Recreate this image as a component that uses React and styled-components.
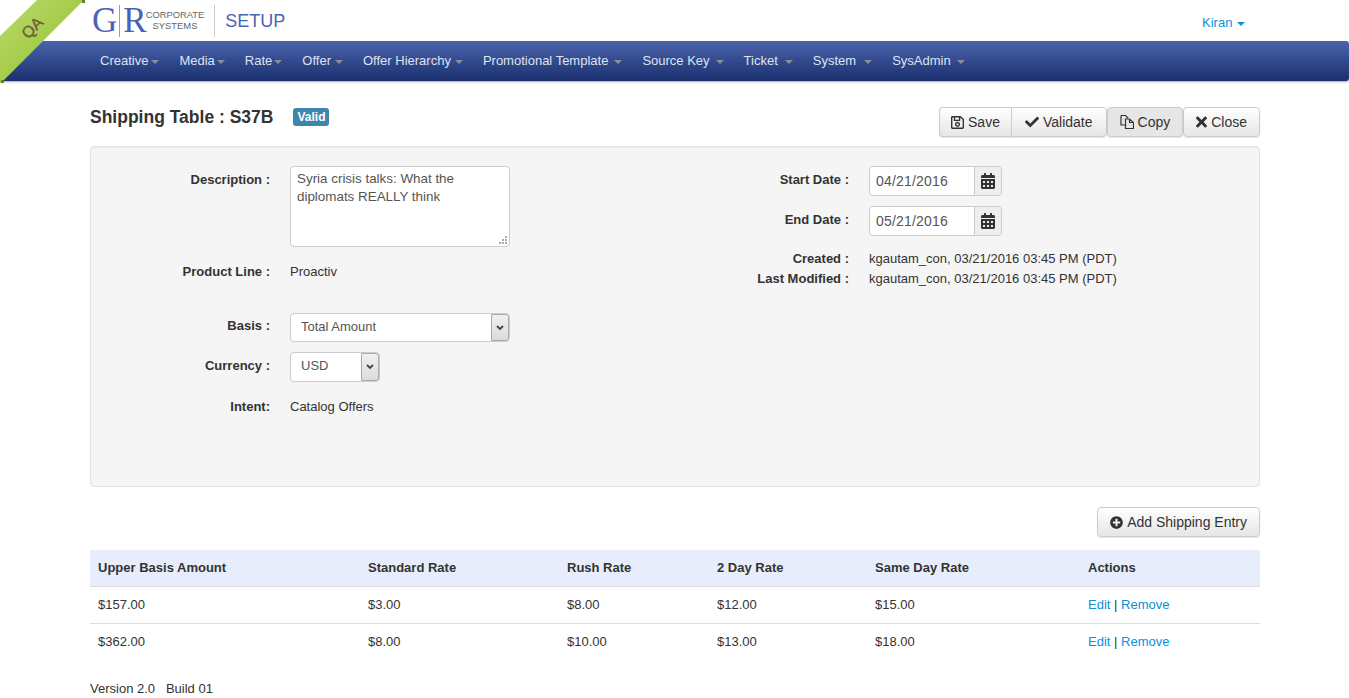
import React from "react";
import styled, { createGlobalStyle } from "styled-components";
import { FaCheck, FaRegSave, FaTimes, FaPlusCircle, FaCalendarAlt } from "react-icons/fa";

// gap is the space between a menu label and its caret
const NAV_ITEMS = [
  { label: "Creative", gap: 3 },
  { label: "Media", gap: 2 },
  { label: "Rate", gap: 2 },
  { label: "Offer", gap: 4 },
  { label: "Offer Hierarchy", gap: 4 },
  { label: "Promotional Template", gap: 6 },
  { label: "Source Key", gap: 6 },
  { label: "Ticket", gap: 7 },
  { label: "System", gap: 8 },
  { label: "SysAdmin", gap: 6 },
];

const ROWS = [
  ["$157.00", "$3.00", "$8.00", "$12.00", "$15.00"],
  ["$362.00", "$8.00", "$10.00", "$13.00", "$18.00"],
];

const Chevron = () => (
  <svg width="8" height="6" viewBox="0 0 8 6">
    <path d="M1 1l3 3 3-3" fill="none" stroke="#444" strokeWidth="1.8" />
  </svg>
);

const CopyIcon = () => (
  <svg width="14" height="16" viewBox="0 0 14 16">
    <path
      d="M1 1.500h4.500l2.500 2.500M1 1.500v9.500h4.500M5.500 5h4l4 3.500v6h-8zM9.500 5v3.500h4"
      fill="none"
      stroke="#333"
      strokeWidth="1.2"
    />
  </svg>
);

const Grip = () => (
  <GripMark width="8" height="8" viewBox="0 0 8 8">
    <path d="M6 0h2v2H6zM3 3h2v2H3zM6 3h2v2H6zM0 6h2v2H0zM3 6h2v2H3zM6 6h2v2H6z" fill="#aaa" />
  </GripMark>
);

const Select = ({ value, width, height }) => (
  <SelectBox $width={width} $height={height}>
    <SelectValue $height={height}>{value}</SelectValue>
    <SelectArrow>
      <Chevron />
    </SelectArrow>
  </SelectBox>
);

const DateField = ({ value }) => (
  <DateGroup>
    <DateValue>{value}</DateValue>
    <DateAddon>
      <CalendarIcon />
    </DateAddon>
  </DateGroup>
);

const App = () => {
  return (
    <>
      <GlobalStyle />
      <Ribbon>
        <RibbonBand>
          <RibbonText>QA</RibbonText>
        </RibbonBand>
        <RibbonTip $end="right" />
        <RibbonTip $end="left" />
      </Ribbon>
      <Header>
        <Logo>
          <LogoLetters>
            G<LogoBar />R
          </LogoLetters>
          <LogoCaption>
            <span>CORPORATE</span>
            <span>SYSTEMS</span>
          </LogoCaption>
        </Logo>
        <AppName>SETUP</AppName>
        <UserMenu>
          Kiran <Caret $color="#0c8fdc" $gap={1} />
        </UserMenu>
      </Header>
      <Nav>
        {NAV_ITEMS.map((item) => (
          <NavItem key={item.label}>
            {item.label}
            <Caret $color="#8a8f9c" $gap={item.gap} />
          </NavItem>
        ))}
      </Nav>
      <Container>
        <TitleBar>
          <Title>Shipping Table : S37B</Title>
          <Badge>Valid</Badge>
          <Toolbar>
            <ButtonGroup>
              <GroupButton>
                <SaveIcon /> Save
              </GroupButton>
              <GroupButton $pad={13}>
                <FaCheck size={14} /> Validate
              </GroupButton>
            </ButtonGroup>
            <Button $active>
              <CopyIcon /> Copy
            </Button>
            <Button>
              <CloseIcon /> Close
            </Button>
          </Toolbar>
        </TitleBar>
        <Panel>
          <Column>
            <FieldRow>
              <Label $top={4}>Description :</Label>
              <TextAreaWrap>
                <TextArea defaultValue="Syria crisis talks: What the diplomats REALLY think" />
                <Grip />
              </TextAreaWrap>
            </FieldRow>
            <FieldRow $mt={15}>
              <Label>Product Line :</Label>
              <Value>Proactiv</Value>
            </FieldRow>
            <FieldRow $mt={31}>
              <Label $top={3}>Basis :</Label>
              <Select value="Total Amount" width={220} height={29} />
            </FieldRow>
            <FieldRow $mt={10}>
              <Label $top={4}>Currency :</Label>
              <Select value="USD" width={90} height={30} />
            </FieldRow>
            <FieldRow $mt={15}>
              <Label>Intent:</Label>
              <Value>Catalog Offers</Value>
            </FieldRow>
          </Column>
          <Column>
            <FieldRow>
              <Label $top={4}>Start Date :</Label>
              <DateField value="04/21/2016" />
            </FieldRow>
            <FieldRow $mt={10}>
              <Label $top={4}>End Date :</Label>
              <DateField value="05/21/2016" />
            </FieldRow>
            <FieldRow $mt={13}>
              <Label>Created :</Label>
              <Value>kgautam_con, 03/21/2016 03:45 PM (PDT)</Value>
            </FieldRow>
            <FieldRow>
              <Label>Last Modified :</Label>
              <Value>kgautam_con, 03/21/2016 03:45 PM (PDT)</Value>
            </FieldRow>
          </Column>
        </Panel>
        <AddBar>
          <Button>
            <FaPlusCircle size={13} /> Add Shipping Entry
          </Button>
        </AddBar>
        <Table>
          <colgroup>
            <col width="270" />
            <col width="199" />
            <col width="150" />
            <col width="158" />
            <col width="213" />
            <col width="180" />
          </colgroup>
          <thead>
            <tr>
              <Th>Upper Basis Amount</Th>
              <Th>Standard Rate</Th>
              <Th>Rush Rate</Th>
              <Th>2 Day Rate</Th>
              <Th>Same Day Rate</Th>
              <Th>Actions</Th>
            </tr>
          </thead>
          <tbody>
            {ROWS.map((row) => (
              <BodyRow key={row[0]}>
                {row.map((cell, i) => (
                  <Td key={i}>{cell}</Td>
                ))}
                <Td>
                  <Link>Edit</Link> | <Link>Remove</Link>
                </Td>
              </BodyRow>
            ))}
          </tbody>
        </Table>
        <Footer>Version 2.0 &nbsp; Build 01</Footer>
      </Container>
    </>
  );
};

export default App;

const GlobalStyle = createGlobalStyle`
  html, body {
    margin: 0;
    padding: 0;
    background: #fff;
    color: #333;
    font-family: "Liberation Sans", Arial, sans-serif;
    font-size: 13px;
    line-height: 20px;
  }
`;

const SaveIcon = styled(FaRegSave)`
  width: 13px;
  height: 15px;
`;

const CloseIcon = styled(FaTimes)`
  width: 11px;
  height: 16px;
`;

const CalendarIcon = styled(FaCalendarAlt)`
  width: 14px;
  height: 16px;
`;

const Ribbon = styled.div`
  position: absolute;
  top: 0;
  left: 0;
  width: 84px;
  height: 83px;
  z-index: 2;
`;

const RibbonBand = styled.div`
  width: 100%;
  height: 100%;
  background: linear-gradient(135deg, #bcd96d 0%, #a2cb47 55%, #8ab52f 100%);
  clip-path: polygon(37px 0, 84px 0, 1px 83px, 0 83px, 0 36px);
`;

const RibbonText = styled.span`
  position: absolute;
  left: 21px;
  top: 18px;
  transform: rotate(-45deg);
  font-size: 16px;
  font-weight: 400;
  -webkit-text-stroke: 0.3px #6b5b3a;
  color: #6b5b3a;
`;

const RibbonTip = styled.span`
  position: absolute;
  width: 3px;
  height: 3px;
  background: #5f7f2a;
  ${({ $end }) => ($end === "right" ? "right: -1px; top: 0;" : "left: 1px; bottom: 0;")}
`;

const Header = styled.header`
  display: flex;
  align-items: center;
  height: 41px;
  padding: 0 104px 0 93px;
  box-sizing: border-box;
`;

const Logo = styled.div`
  display: flex;
  align-items: center;
  height: 32px;
  padding-right: 10px;
  border-right: 1px solid #ccc;
`;

const LogoLetters = styled.div`
  display: flex;
  align-items: center;
  margin-left: -1px;
  font-family: "Liberation Serif", serif;
  font-size: 35px;
  line-height: 32px;
  color: #4a63b5;
`;

const LogoBar = styled.span`
  display: inline-block;
  width: 1px;
  height: 32px;
  margin: 0 3px 0 2px;
  background: #8fbb4b;
`;

const LogoCaption = styled.div`
  display: flex;
  flex-direction: column;
  align-items: center;
  margin-left: -1px;
  font-size: 9.4px;
  line-height: 10.500px;
  color: #666;
`;

const AppName = styled.div`
  margin: 0 0 0 10px;
  font-size: 18px;
  color: #4a63b5;
`;

const UserMenu = styled.a`
  margin-left: auto;
  margin-top: 5px;
  color: #0c8fdc;
`;

const Caret = styled.span`
  display: inline-block;
  width: 0;
  height: 0;
  margin-left: ${({ $gap }) => $gap}px;
  vertical-align: middle;
  border-top: 4px solid ${({ $color }) => $color};
  border-left: 4px solid transparent;
  border-right: 4px solid transparent;
`;

const Nav = styled.nav`
  display: flex;
  align-items: center;
  gap: 20px;
  height: 40px;
  padding-left: 100px;
  box-sizing: border-box;
  border-radius: 3px;
  background: linear-gradient(to bottom, #4a63ab, #1a3070);
  box-shadow: 0 1px 2px rgba(0, 0, 0, 0.35);
`;

const NavItem = styled.a`
  color: #dfe3ee;
  white-space: nowrap;
`;

const Container = styled.main`
  width: 1170px;
  margin: 0 0 0 90px;
`;

const TitleBar = styled.div`
  display: flex;
  align-items: flex-start;
  height: 30px;
  margin-top: 26px;
`;

const Title = styled.h1`
  margin: 0 20px 0 0;
  font-size: 17.5px;
  font-weight: 700;
  line-height: 20px;
`;

const Badge = styled.span`
  margin-top: 1px;
  padding: 0 4px;
  border-radius: 3px;
  background: #3e87ac;
  color: #fff;
  font-size: 12px;
  font-weight: 700;
  line-height: 18px;
`;

const Toolbar = styled.div`
  display: flex;
  margin-left: auto;
`;

const ButtonGroup = styled.div`
  display: flex;
`;

const Button = styled.button`
  display: inline-flex;
  align-items: center;
  gap: 4px;
  height: 30px;
  padding: 0 12px;
  border: 1px solid #ccc;
  border-radius: 4px;
  background: ${({ $active }) =>
    $active ? "#e6e6e6" : "linear-gradient(to bottom, #fff, #e6e6e6)"};
  box-shadow: 0 1px 1px rgba(0, 0, 0, 0.1);
  color: #333;
  font-family: inherit;
  font-size: 14px;
`;

const GroupButton = styled(Button)`
  padding: 0 ${({ $pad }) => $pad || 11}px;
  border-radius: 0;
  &:first-child {
    border-radius: 4px 0 0 4px;
    border-right: 0;
  }
  &:last-child {
    border-radius: 0 4px 4px 0;
  }
`;

const Panel = styled.section`
  display: grid;
  grid-template-columns: 579px 1fr;
  height: 341px;
  margin-top: 9px;
  padding-top: 19px;
  box-sizing: border-box;
  border: 1px solid #e3e3e3;
  border-radius: 4px;
  background: #f5f5f5;
  box-shadow: inset 0 1px 1px rgba(0, 0, 0, 0.05);
`;

const Column = styled.div`
  display: flex;
  flex-direction: column;
`;

const FieldRow = styled.div`
  display: flex;
  align-items: flex-start;
  gap: 20px;
  margin-top: ${({ $mt }) => $mt || 0}px;
`;

const Label = styled.label`
  flex: 0 0 179px;
  padding-top: ${({ $top }) => $top || 0}px;
  text-align: right;
  font-weight: 700;
`;

const Value = styled.div`
  color: #333;
`;

const TextAreaWrap = styled.div`
  position: relative;
  display: flex;
`;

const TextArea = styled.textarea`
  width: 220px;
  height: 81px;
  box-sizing: border-box;
  padding: 3px 6px;
  border: 1px solid #ccc;
  border-radius: 4px;
  background: #fff;
  color: #555;
  font-family: inherit;
  font-size: 13.4px;
  line-height: 18px;
  outline: none;
  resize: none;
`;

const GripMark = styled.svg`
  position: absolute;
  right: 3px;
  bottom: 3px;
`;

const SelectBox = styled.div`
  display: flex;
  align-items: stretch;
  width: ${({ $width }) => $width}px;
  height: ${({ $height }) => $height}px;
  box-sizing: border-box;
  border: 1px solid #ccc;
  border-radius: 4px;
  background: #fff;
  color: #555;
`;

const SelectValue = styled.div`
  flex: 1;
  padding-left: 10px;
  line-height: ${({ $height }) => $height - 4}px;
`;

const SelectArrow = styled.div`
  display: flex;
  align-items: center;
  justify-content: center;
  width: 16px;
  border: 1px solid #aaa;
  border-radius: 0 3px 3px 0;
  background: linear-gradient(to bottom, #f0f0f0, #dcdcdc);
`;

const DateGroup = styled.div`
  display: flex;
  width: 133px;
  height: 30px;
  box-sizing: border-box;
  border: 1px solid #ccc;
  border-radius: 4px;
  color: #555;
`;

const DateValue = styled.div`
  flex: 1;
  padding-left: 6px;
  border-radius: 4px 0 0 4px;
  background: #fff;
  font-size: 14px;
  letter-spacing: 0.2px;
  line-height: 28px;
`;

const DateAddon = styled.div`
  display: flex;
  align-items: center;
  justify-content: center;
  width: 26px;
  border-left: 1px solid #ccc;
  border-radius: 0 4px 4px 0;
  background: #eee;
  color: #333;
`;

const AddBar = styled.div`
  display: flex;
  justify-content: flex-end;
  margin-top: 20px;
`;

const Table = styled.table`
  width: 1170px;
  margin-top: 13px;
  border-collapse: collapse;
  table-layout: fixed;
`;

const Th = styled.th`
  height: 36px;
  padding: 0 8px;
  box-sizing: border-box;
  background: #e8edfc;
  border-bottom: 1px solid #ddd;
  text-align: left;
  font-weight: 700;
`;

const BodyRow = styled.tr`
  &:not(:last-child) td {
    border-bottom: 1px solid #ddd;
  }
`;

const Td = styled.td`
  height: 37px;
  padding: 0 8px;
  box-sizing: border-box;
`;

const Link = styled.a`
  color: #0c8fdc;
`;

const Footer = styled.footer`
  margin-top: 19px;
  color: #333;
`;
